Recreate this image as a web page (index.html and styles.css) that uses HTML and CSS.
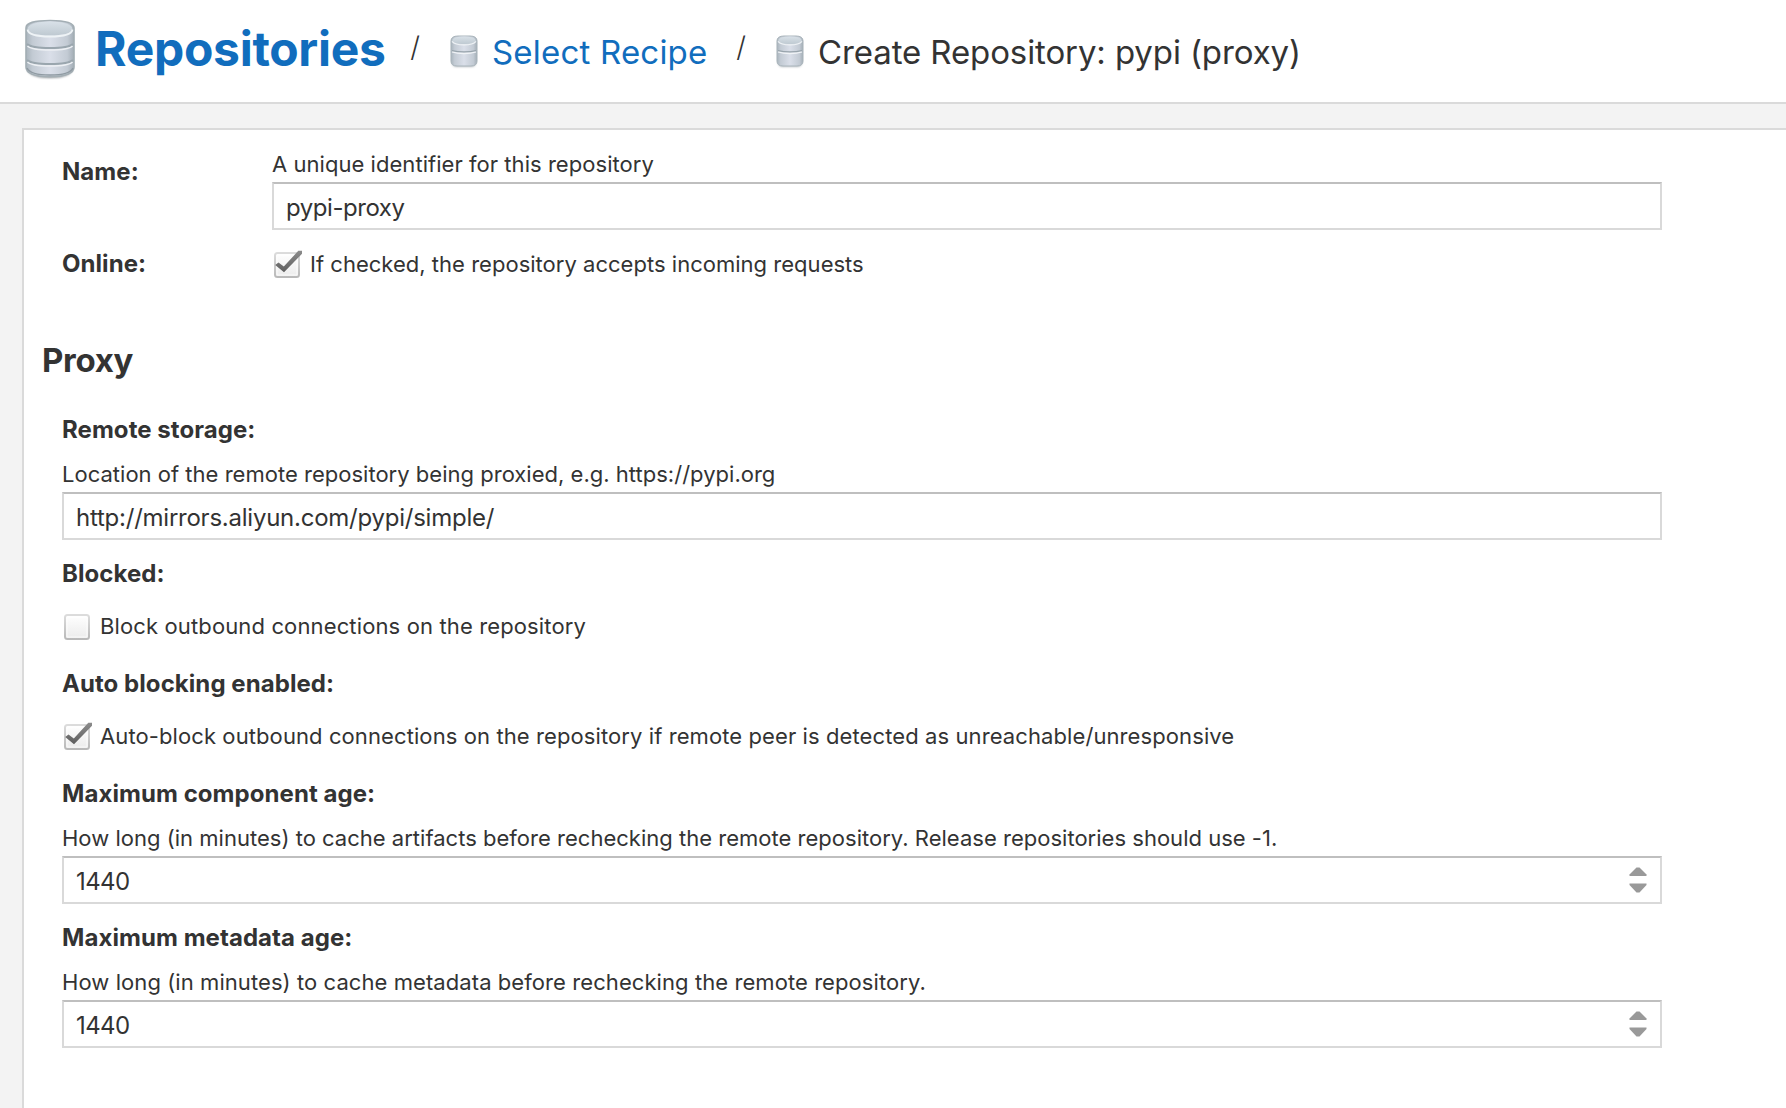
FILE: index.html
```html
<!DOCTYPE html>
<html lang="en">
<head>
<meta charset="utf-8">
<title>Create Repository: pypi (proxy)</title>
<link rel="stylesheet" href="styles.css">
</head>
<body>
<svg class="defs" width="0" height="0" aria-hidden="true">
  <defs>
    <linearGradient id="metal" x1="0" x2="1" y1="0" y2="0">
      <stop offset="0" stop-color="#a9b4bc"/><stop offset=".14" stop-color="#c3cbd4"/>
      <stop offset=".5" stop-color="#dadfe9"/><stop offset=".86" stop-color="#c3cbd4"/><stop offset="1" stop-color="#a3adb6"/>
    </linearGradient>
    <linearGradient id="lid" x1="0" x2="0" y1="0" y2="1">
      <stop offset="0" stop-color="#d9e1e8"/><stop offset="1" stop-color="#bec9d1"/>
    </linearGradient>
    <linearGradient id="box" x1="0" x2="0" y1="0" y2="1">
      <stop offset="0" stop-color="#fff"/><stop offset="1" stop-color="#ebebeb"/>
    </linearGradient>
    <linearGradient id="rim" x1="0" x2="0" y1="0" y2="1">
      <stop offset="0" stop-color="#dcdcdc"/><stop offset="1" stop-color="#b9b9b9"/>
    </linearGradient>
    <linearGradient id="tick" x1="0" x2="0" y1="0" y2="1">
      <stop offset="0" stop-color="#8c8c8c"/><stop offset="1" stop-color="#5e5e5e"/>
    </linearGradient>
    <filter id="soft" x="-10%" y="-10%" width="120%" height="125%"><feGaussianBlur stdDeviation="1"/></filter>
    <symbol id="database" viewBox="0 0 28 34">
      <path d="M2 5v22q0 5 5 5h14q5 0 5-5V5z" fill="#8e979e" opacity=".6" filter="url(#soft)"/>
      <path d="M1 6q0-5 7-5h12q7 0 7 5v20q0 5-6 5H7q-6 0-6-5z" fill="url(#metal)" stroke="#a9b4bb" stroke-width="1"/>
      <path d="M2 15.500q5 1.500 12 1.500t12-1.500" fill="none" stroke="#98a4ac" stroke-width="1.300"/>
      <path d="M2 17q5 1.500 12 1.500t12-1.500" fill="none" stroke="#f0f3f6" stroke-width="1.300"/>
      <ellipse cx="14" cy="5.300" rx="11.800" ry="3.900" fill="url(#lid)"/>
      <path d="M2 6.300q3 3.600 12 3.600t12-3.600" fill="none" stroke="#eef2f5" stroke-width="1.300"/>
    </symbol>
    <symbol id="checkbox" viewBox="0 0 30 28">
      <rect x="3" y="3" width="24" height="24" rx="2.500" fill="url(#box)" stroke="url(#rim)" stroke-width="2"/>
      <rect x="5" y="5" width="20" height="20" fill="none" stroke="#fff" opacity=".7"/>
    </symbol>
    <symbol id="checked" viewBox="0 0 30 28">
      <use href="#checkbox" width="30" height="28"/>
      <path d="M3.200 15 6.500 12.600 11.800 16.600 26.300.8H30V3.800L12 22.200z" fill="url(#tick)"/>
    </symbol>
    <symbol id="spinner" viewBox="0 0 18 26">
      <path d="M7.500.5h3L17.500 7.500V9H.5V7.500z" fill="#999"/>
      <path d="M.5 16.500h17V18l-7 7.500h-3L.5 18z" fill="#999"/>
    </symbol>
  </defs>
</svg>

<header class="crumbs">
  <svg class="icon-large" viewBox="0 0 54 64" aria-hidden="true">
    <path d="M4 12v38q1 10 23 10t23-10V12z" fill="#6f787e" opacity=".8" filter="url(#soft)"/>
    <path d="M3 10Q3 2.500 27 2.500T51 10v39q0 9.500-24 9.500T3 49z" fill="url(#metal)" stroke="#a3aeb4" stroke-width="1.600"/>
    <path d="M4 26q4 4 23 4T50 26M4 42q4 4 23 4T50 42" fill="none" stroke="#9aa6ae" stroke-width="2"/>
    <path d="M4.500 28q4 4 22.500 4T49.500 28M4.500 44q4 4 22.500 4T49.500 44" fill="none" stroke="#edf0f4" stroke-width="1.600"/>
    <ellipse cx="27" cy="10.500" rx="22.300" ry="7" fill="url(#lid)"/>
    <path d="M4.500 11.500q1 7 22.500 7T49.500 11.500" fill="none" stroke="#eef3f6" stroke-width="1.800"/>
    <path d="M4 50q3 7 23 7t23-7" fill="none" stroke="#8f9aa2" stroke-width="1.500"/>
  </svg>
  <a class="crumb-root">Repositories</a>
  <span class="slash">/</span>
  <svg class="icon-small" aria-hidden="true"><use href="#database"/></svg>
  <a class="crumb crumb-link">Select Recipe</a>
  <span class="slash">/</span>
  <svg class="icon-small" aria-hidden="true"><use href="#database"/></svg>
  <span class="crumb crumb-current">Create Repository: pypi (proxy)</span>
</header>

<main class="panel">
  <section class="general">
    <label class="label name-label" for="name">Name:</label>
    <div>
      <p class="hint hint-name">A unique identifier for this repository</p>
      <input class="text name-value" id="name" type="text" value="pypi-proxy">
    </div>
    <span class="label">Online:</span>
    <div class="check online"><svg class="box"><use href="#checked"/></svg><span>If checked, the repository accepts incoming requests</span></div>
  </section>

  <h2 class="section-title">Proxy</h2>

  <section class="fields">
    <div class="field">
      <label class="label" for="remote">Remote storage:</label>
      <p class="hint hint-remote">Location of the remote repository being proxied, e.g. https://pypi.org</p>
      <input class="text" id="remote" type="text" value="http://mirrors.aliyun.com/pypi/simple/">
    </div>
    <div class="field field-check">
      <span class="label">Blocked:</span>
      <div class="check check-block"><svg class="box"><use href="#checkbox"/></svg><span>Block outbound connections on the repository</span></div>
    </div>
    <div class="field field-check">
      <span class="label">Auto blocking enabled:</span>
      <div class="check check-auto"><svg class="box"><use href="#checked"/></svg><span>Auto-block outbound connections on the repository if remote peer is detected as unreachable/unresponsive</span></div>
    </div>
    <div class="field">
      <label class="label" for="component-age">Maximum component age:</label>
      <p class="hint hint-component">How long (in minutes) to cache artifacts before rechecking the remote repository. Release repositories should use -1.</p>
      <div class="number">
        <input class="text digits" id="component-age" type="text" value="1440">
        <svg class="spinner"><use href="#spinner"/></svg>
      </div>
    </div>
    <div class="field">
      <label class="label" for="metadata-age">Maximum metadata age:</label>
      <p class="hint hint-metadata">How long (in minutes) to cache metadata before rechecking the remote repository.</p>
      <div class="number">
        <input class="text digits" id="metadata-age" type="text" value="1440">
        <svg class="spinner"><use href="#spinner"/></svg>
      </div>
    </div>
  </section>
</main>
</body>
</html>
```
FILE: styles.css
```css
* { box-sizing: border-box; }

body {
  margin: 0;
  height: 1108px;
  overflow: hidden;
  display: flex;
  flex-direction: column;
  background: #f3f3f3;
  color: #333;
  font-family: Inter, "Liberation Sans", sans-serif;
  font-size: 22px;
}

p, h2 { margin: 0; }
svg { display: block; flex: none; }
.defs { position: absolute; }

/* Breadcrumb header */
.crumbs {
  flex: none;
  height: 104px;
  padding-left: 23px;
  display: flex;
  align-items: flex-start;
  background: #fff;
  border-bottom: 2px solid #dadada;
  white-space: nowrap;
}
.icon-large { width: 54px; height: 64px; margin-top: 18px; }
.crumb-root {
  width: 313px;
  margin: 19px 0 0 18px;
  line-height: 60px;
  font-size: 48px;
  font-weight: 700;
  letter-spacing: -.29px;
  color: #116dbd;
}
.slash {
  width: 14px;
  margin-top: 27px;
  line-height: 40px;
  font-size: 28px;
  font-weight: 300;
  text-align: center;
}
.icon-small { width: 28px; height: 34px; margin: 35px 14px 0 28px; }
.crumb { margin-top: 32px; line-height: 40px; font-size: 33px; }
.crumb-link { width: 242px; letter-spacing: .2px; color: #116dbd; }
.crumb-current { letter-spacing: -.11px; }

/* Form panel */
.panel {
  flex: 1;
  margin: 24px 0 0 22px;
  padding: 22px 0 0 38px;
  border: 2px solid #dadada;
  border-width: 2px 0 0 2px;
  background: #fff;
}
.general, .fields { width: 1600px; }
.general {
  display: grid;
  grid-template-columns: 210px 1fr;
  row-gap: 19px;
}
.label {
  display: block;
  padding-top: 1px;
  line-height: 28px;
  font-size: 24px;
  font-weight: 700;
  letter-spacing: .06px;
}
.name-label { padding-top: 6px; }
.hint {
  margin-bottom: 6px;
  line-height: 24px;
  white-space: nowrap;
}
.hint-name { letter-spacing: .045px; }
.hint-remote { letter-spacing: .015px; }
.hint-component { letter-spacing: .015px; }
.hint-metadata { letter-spacing: .075px; }

.text {
  display: block;
  width: 100%;
  height: 48px;
  margin: 0;
  padding: 3px 12px 0;
  border: 2px solid #d9d9d9;
  border-top-color: #bfbfbf;
  border-radius: 0;
  background: #fff;
  color: #333;
  font: 24px Inter, "Liberation Sans", sans-serif;
  letter-spacing: -.24px;
  outline: none;
}
.name-value { letter-spacing: -.45px; }
.digits { letter-spacing: -.59px; }

.number { position: relative; }
.spinner {
  position: absolute;
  top: 11px;
  right: 15px;
  width: 18px;
  height: 26px;
}

.check {
  display: flex;
  gap: 8px;
  height: 28px;
  line-height: 28px;
  white-space: nowrap;
}
.online { margin-top: 1px; letter-spacing: .02px; }
.check-block { letter-spacing: .13px; }
.check-auto { letter-spacing: .095px; }
.box { width: 30px; height: 28px; }

.section-title {
  margin: 62px 0 35px -20px;
  line-height: 40px;
  font-size: 33px;
  font-weight: 700;
  letter-spacing: -.3px;
}

.fields { display: flex; flex-direction: column; gap: 19px; }
.field .label { margin-bottom: 18px; }
.field-check .label { margin-bottom: 24px; }
.field-check { margin-bottom: 10px; }
```
